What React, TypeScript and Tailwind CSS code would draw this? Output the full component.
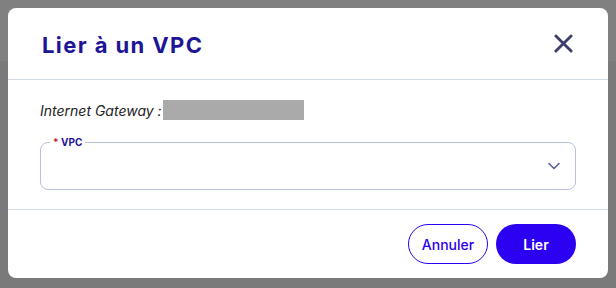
import React from 'react';

const CloseIcon: React.FC<{ className?: string }> = ({ className }) => (
  <svg viewBox="0 0 20 20" className={className} fill="none" stroke="currentColor" strokeWidth={3} strokeLinecap="round">
    <path d="M2 2 L18 18 M18 2 L2 18" />
  </svg>
);

const ChevronDown: React.FC<{ className?: string }> = ({ className }) => (
  <svg viewBox="0 0 12 8" className={className} fill="none" stroke="currentColor" strokeWidth={1.6} strokeLinecap="round" strokeLinejoin="round">
    <path d="M1 1.5 L6 6.5 L11 1.5" />
  </svg>
);

export default function App() {
  return (
    <div className="relative h-[288px] w-[616px] overflow-hidden bg-[#7a7a7a] font-['Inter',sans-serif]">
      <div className="h-[61px] bg-[#808080]" />
      <div className="absolute inset-0 p-2">
        <div className="flex h-[270px] w-[600px] flex-col rounded-lg bg-white">
          {/* header */}
          <div className="flex h-[72px] items-center justify-between border-b border-[#d3dbeb] pl-8 pr-[35px]">
            <h2 className="pl-[2px] pt-1 text-[22px] font-bold tracking-[1.4px] text-[#1e1596]">Lier à un VPC</h2>
            <button className="text-[#3c3e6c]">
              <CloseIcon className="h-[19px] w-[19px]" />
            </button>
          </div>

          {/* body */}
          <div className="flex h-[130px] flex-col border-b border-[#d3dbeb] px-8 pt-[19px]">
            <div className="flex items-center gap-0">
              <span className="pt-px text-[14px] italic text-[#222]">Internet Gateway :</span>
              <span className="ml-px h-5 w-[141px] bg-[#aaaaaa]" />
            </div>
            <div className="relative mt-[21px] flex h-[48px] items-center justify-end rounded-lg border border-[#b7c1dc] pr-[15px]">
              <span className="absolute -top-[7px] left-[9px] bg-white px-[3px] text-[10px] font-bold leading-[12px] text-[#1e1596]">
                <span className="text-[#c0262d]">*</span> VPC
              </span>
              <ChevronDown className="h-[8px] w-[12px] text-[#5b6190]" />
            </div>
          </div>

          {/* footer */}
          <div className="flex flex-1 items-start justify-end gap-2 pr-8 pt-[14px]">
            <button className="h-10 w-20 rounded-full border border-[#2c00f0] text-[14px] font-medium text-[#2c00f0]">
              Annuler
            </button>
            <button className="h-10 w-20 rounded-full bg-[#2c00f0] text-[14px] font-semibold text-white">
              Lier
            </button>
          </div>
        </div>
      </div>
    </div>
  );
}
